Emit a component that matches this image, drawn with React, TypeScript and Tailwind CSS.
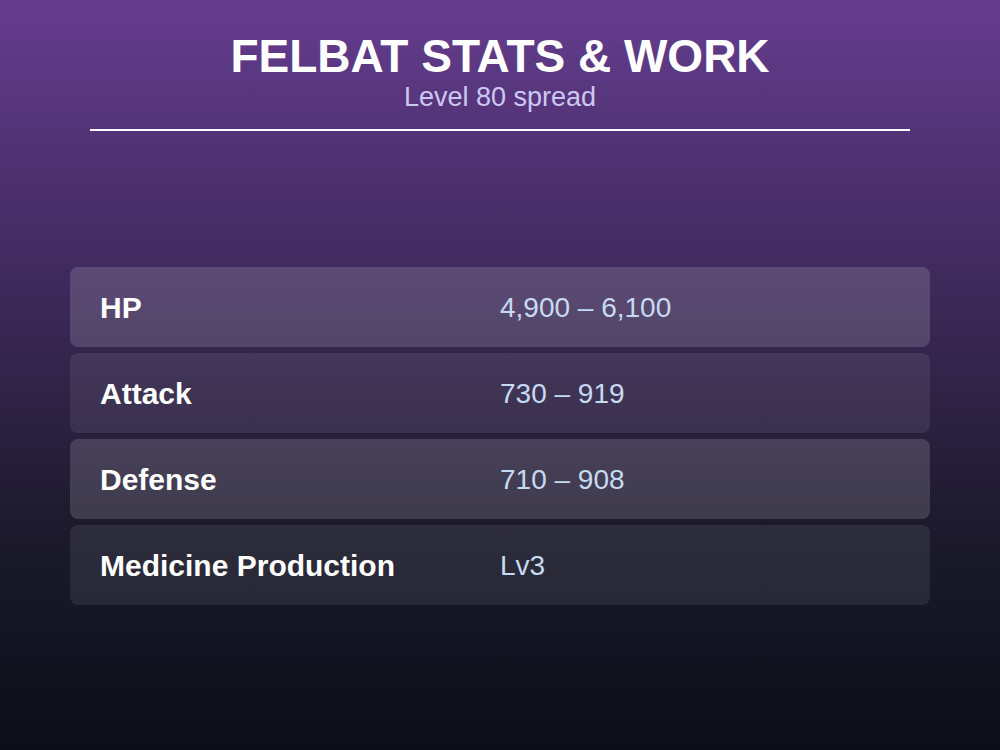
import React from "react";

const rows = [
  { label: "HP", value: "4,900 – 6,100", strong: true },
  { label: "Attack", value: "730 – 919", strong: false },
  { label: "Defense", value: "710 – 908", strong: true },
  { label: "Medicine Production", value: "Lv3", strong: false },
];

export default function App() {
  return (
    <div
      className="w-[1000px] h-[750px] flex flex-col bg-[linear-gradient(180deg,#653d8f_0%,#412b5f_35%,#1c1a2c_70%,#0b0e17_100%)]"
      style={{ fontFamily: '"Liberation Sans", Arial, sans-serif' }}
    >
      <div className="pt-[30px] flex flex-col items-center">
        <h1 className="text-[46px] leading-[52px] font-bold text-white">FELBAT STATS &amp; WORK</h1>
        <p className="text-[27px] leading-[30px] text-[#cdc8f2]">Level 80 spread</p>
        <div className="mt-[17px] w-[820px] h-[2px] bg-white" />
      </div>
      <div className="flex-1 flex flex-col justify-center px-[70px] pb-[10px]">
        <div className="flex flex-col gap-[6px]">
          {rows.map((r) => (
            <div
              key={r.label}
              className={
                "h-[80px] rounded-[8px] flex items-center px-[30px] pt-[2px] " +
                (r.strong ? "bg-white/15" : "bg-white/[0.08]")
              }
            >
              <div className="w-[400px] text-[30px] font-bold text-white">{r.label}</div>
              <div className="text-[28px] text-[#c6daf2]">{r.value}</div>
            </div>
          ))}
        </div>
      </div>
    </div>
  );
}
